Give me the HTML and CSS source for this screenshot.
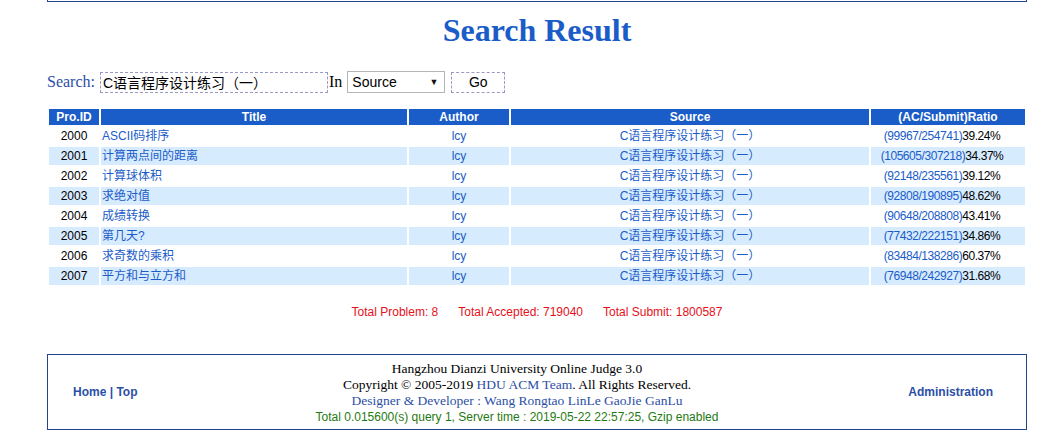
FILE: index.html
```html
<!DOCTYPE html>
<html>
<head>
<meta charset="utf-8">
<title>Search Result</title>
<link rel="stylesheet" href="styles.css">
</head>
<body>
<div class="page">
  <div class="topbox"></div>
  <h1 class="title">Search Result</h1>
  <form class="search">
    <span class="search-label">Search:</span>
    <input class="search-input" type="text" value="C语言程序设计练习（一）">
    <span class="in-label">In</span>
    <div class="select"><span>Source</span><span class="arrow">▼</span></div>
    <button class="go" type="button">Go</button>
  </form>
  <table class="results">
    <colgroup>
      <col class="c-id"><col class="c-title"><col class="c-author"><col class="c-source"><col class="c-ratio">
    </colgroup>
    <thead>
      <tr><th>Pro.ID</th><th>Title</th><th>Author</th><th>Source</th><th>(AC/Submit)Ratio</th></tr>
    </thead>
    <tbody>
      <tr><td class="id">2000</td><td class="t"><a>ASCII码排序</a></td><td class="ctr"><a>lcy</a></td><td class="ctr"><a>C语言程序设计练习（一）</a></td><td class="ratio"><a>(99967/254741)</a>39.24%</td></tr>
      <tr class="alt"><td class="id">2001</td><td class="t"><a>计算两点间的距离</a></td><td class="ctr"><a>lcy</a></td><td class="ctr"><a>C语言程序设计练习（一）</a></td><td class="ratio"><a>(105605/307218)</a>34.37%</td></tr>
      <tr><td class="id">2002</td><td class="t"><a>计算球体积</a></td><td class="ctr"><a>lcy</a></td><td class="ctr"><a>C语言程序设计练习（一）</a></td><td class="ratio"><a>(92148/235561)</a>39.12%</td></tr>
      <tr class="alt"><td class="id">2003</td><td class="t"><a>求绝对值</a></td><td class="ctr"><a>lcy</a></td><td class="ctr"><a>C语言程序设计练习（一）</a></td><td class="ratio"><a>(92808/190895)</a>48.62%</td></tr>
      <tr><td class="id">2004</td><td class="t"><a>成绩转换</a></td><td class="ctr"><a>lcy</a></td><td class="ctr"><a>C语言程序设计练习（一）</a></td><td class="ratio"><a>(90648/208808)</a>43.41%</td></tr>
      <tr class="alt"><td class="id">2005</td><td class="t"><a>第几天?</a></td><td class="ctr"><a>lcy</a></td><td class="ctr"><a>C语言程序设计练习（一）</a></td><td class="ratio"><a>(77432/222151)</a>34.86%</td></tr>
      <tr><td class="id">2006</td><td class="t"><a>求奇数的乘积</a></td><td class="ctr"><a>lcy</a></td><td class="ctr"><a>C语言程序设计练习（一）</a></td><td class="ratio"><a>(83484/138286)</a>60.37%</td></tr>
      <tr class="alt"><td class="id">2007</td><td class="t"><a>平方和与立方和</a></td><td class="ctr"><a>lcy</a></td><td class="ctr"><a>C语言程序设计练习（一）</a></td><td class="ratio"><a>(76948/242927)</a>31.68%</td></tr>
    </tbody>
  </table>
  <div class="summary">
    <span>Total Problem: 8</span>
    <span>Total Accepted: 719040</span>
    <span>Total Submit: 1800587</span>
  </div>
  <div class="footer">
    <div class="f-left"><a>Home</a> | <a>Top</a></div>
    <div class="f-center">
      <div>Hangzhou Dianzi University Online Judge 3.0</div>
      <div>Copyright © 2005-2019 <a class="f-link">HDU ACM Team</a>. All Rights Reserved.</div>
      <div class="f-link">Designer &amp; Developer : Wang Rongtao LinLe GaoJie GanLu</div>
      <div class="f-stat">Total 0.015600(s) query 1, Server time : 2019-05-22 22:57:25, Gzip enabled</div>
    </div>
    <div class="f-right"><a>Administration</a></div>
  </div>
</div>
</body>
</html>
```

FILE: styles.css
```css
html, body {
  margin: 0;
  padding: 0;
  background: #ffffff;
}
body {
  font-family: "Liberation Serif", "Times New Roman", serif;
  color: #000;
}
.page {
  width: 980px;
  margin-left: 47px;
}
.topbox {
  border: 1px solid #23448c;
  border-top: none;
  box-sizing: border-box;
  height: 2px;
}
.title {
  margin: 10px 0 0 0;
  text-align: center;
  font-family: "Liberation Serif", "Times New Roman", serif;
  font-size: 32px;
  line-height: 37px;
  font-weight: bold;
  color: #1a5cc8;
}
.search {
  display: flex;
  align-items: center;
  height: 22px;
  margin: 22px 0 0 0;
  font-size: 16px;
}
.search-label {
  color: #2c4fa6;
  margin-right: 5px;
}
.search-input {
  box-sizing: border-box;
  width: 228px;
  height: 21px;
  margin: 0;
  padding: 0 2px;
  border: 1px dashed #9a9ac2;
  background: #fff;
  font-family: "Liberation Sans", "Noto Sans CJK SC", sans-serif;
  font-size: 14px;
  color: #000;
  outline: none;
}
.in-label {
  margin: 0 5px 0 1px;
}
.select {
  box-sizing: border-box;
  width: 98px;
  height: 22px;
  border: 1px solid #b5b5b5;
  background: #fff;
  display: flex;
  align-items: center;
  justify-content: space-between;
  padding: 0 6px 0 4px;
  font-family: "Liberation Sans", sans-serif;
  font-size: 14px;
}
.arrow {
  font-size: 9px;
  color: #111;
}
.go {
  box-sizing: border-box;
  width: 54px;
  height: 21px;
  margin-left: 6px;
  border: 1px dashed #9a9ac2;
  background: #fff;
  font-family: "Liberation Sans", sans-serif;
  font-size: 14px;
  color: #000;
  padding: 0;
}
.results {
  margin-top: 14px;
  width: 980px;
  border-spacing: 2px;
  table-layout: fixed;
  font-family: "Liberation Sans", "Noto Sans CJK SC", sans-serif;
  font-size: 12px;
}
.c-id { width: 50px; }
.c-title { width: 306px; }
.c-author { width: 100px; }
.c-source { width: 358px; }
.c-ratio { width: 154px; }
.results th {
  background: #1a5cc8;
  color: #fff;
  font-weight: bold;
  height: 16px;
  padding: 0;
  line-height: 16px;
  text-align: center;
}
.results td {
  height: 18px;
  padding: 0;
  line-height: 18px;
  white-space: nowrap;
  overflow: hidden;
}
.results tr.alt td {
  background: #d7ebff;
}
.results a {
  color: #1a5cc8;
  text-decoration: none;
}
.id { text-align: center; }
.t { text-align: left; padding-left: 1px !important; }
.ctr { text-align: center; }
.ratio {
  text-align: center;
  padding-right: 12px !important;
  letter-spacing: -0.45px;
}
.summary {
  display: flex;
  justify-content: center;
  gap: 20px;
  margin-top: 18px;
  font-family: "Liberation Sans", sans-serif;
  font-size: 12px;
  line-height: 14px;
  color: #e5101a;
}
.footer {
  margin-top: 35px;
  box-sizing: border-box;
  height: 76px;
  border: 1px solid #23448c;
  display: flex;
  align-items: center;
}
.f-left {
  width: 120px;
  padding-left: 25px;
  box-sizing: border-box;
  font-family: "Liberation Sans", sans-serif;
  font-weight: bold;
  font-size: 12px;
  color: #2c4fa6;
}
.f-left a, .f-right a { color: #2c4fa6; }
.f-center {
  flex: 1;
  text-align: center;
  font-size: 13.5px;
  line-height: 16px;
  padding-top: 2px;
}
.f-link { color: #2c4fa6; }
.f-stat {
  font-family: "Liberation Sans", sans-serif;
  font-size: 12px;
  color: #1f7a12;
}
.f-right {
  width: 160px;
  padding-right: 33px;
  box-sizing: border-box;
  text-align: right;
  font-family: "Liberation Sans", sans-serif;
  font-weight: bold;
  font-size: 12px;
}
```
